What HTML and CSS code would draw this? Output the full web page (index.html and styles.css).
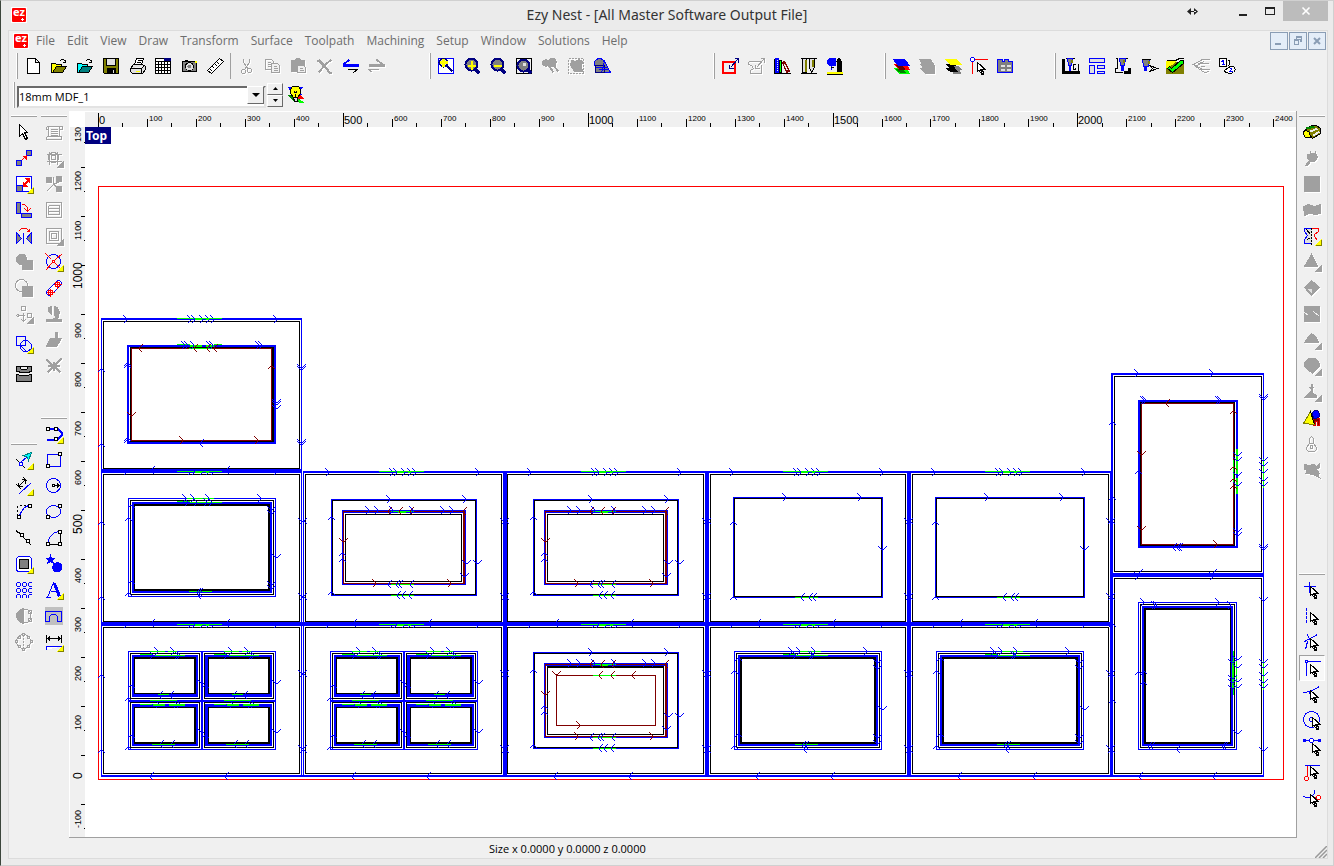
FILE: index.html
```html
<!DOCTYPE html>
<html lang="en">
<head>
<meta charset="utf-8">
<title>Ezy Nest - [All Master Software Output File]</title>
<link rel="stylesheet" href="styles.css">
</head>
<body>
<svg class="defs" aria-hidden="true">
  <symbol id="tri" viewBox="-.5 -.5 18 18" overflow="visible"><path class="tri-f" d="M17 12V17H12z"/><path class="tri-s" d="M12 17H17V12"/></symbol>
  <symbol id="trig" viewBox="-.5 -.5 18 18" overflow="visible"><path class="fg" d="M17 12V17H12z"/></symbol>
  <symbol id="cur" viewBox="-.5 -.5 18 18" overflow="visible"><path class="fw sk" d="M6 4V14L8 12L11 17L13 16L11 11H14z"/><path class="sk" d="M7 5L13 11M9 11L12 17M10 11L13 16"/></symbol>
  <symbol id="logo" viewBox="0 0 16 16"><rect width="16" height="16" fill="#fff"/><rect x="1" y="1" width="14" height="14" rx="1" fill="#f00"/><text class="logo-text" x="2" y="9">ez</text><path d="M10 12H13V13H10zM11 11H12V14H11z" fill="#fff"/></symbol>
</svg>
<div class="window">
  <header class="titlebar">
    <svg class="logo"><use href="#logo"/></svg>
    <h1>Ezy Nest - [All Master Software Output File]</h1>
    <div class="winbtns">
      <svg class="resize-hint" viewBox="0 0 11 9"><path d="M0 4.500L4 1V8zM11 4.500L7 1V8zM2 4H9V5H2z" fill="#222"/></svg>
      <button aria-label="Minimize"><svg viewBox="0 0 10 10"><path d="M1 8H9V10H1z" fill="#222"/></svg></button>
      <button aria-label="Maximize"><svg viewBox="0 0 10 10"><path d="M0 1H10V9H0zM1 3V8H9V3z" fill="#222" fill-rule="evenodd"/></svg></button>
      <button class="close" aria-label="Close"><svg viewBox="0 0 10 10"><path d="M1.500 1.500L8.500 8.500M8.500 1.500L1.500 8.500" stroke="#fff" stroke-width="1.600"/></svg></button>
    </div>
  </header>
  <div class="client">
    <nav class="menubar">
      <svg class="logo"><use href="#logo"/></svg>
      <button>File</button><button>Edit</button><button>View</button><button>Draw</button><button>Transform</button><button>Surface</button><button>Toolpath</button><button>Machining</button><button>Setup</button><button>Window</button><button>Solutions</button><button>Help</button>
      <div class="mdi">
        <button aria-label="Minimize document"><svg viewBox="0 0 16 16"><path d="M4 10H10V12H4z" fill="#8a9db5"/></svg></button>
        <button aria-label="Restore document"><svg viewBox="0 0 16 16"><path d="M6 3H12V9H10V7H6zM4 6H9V12H4z" fill="#8a9db5"/><path d="M7 5H11V6H7zM5 8H8V11H5z" fill="#e4edf8"/></svg></button>
        <button aria-label="Close document"><svg viewBox="0 0 16 16"><path d="M5 5L11 11M11 5L5 11" stroke="#8a9db5" stroke-width="2"/></svg></button>
      </div>
    </nav>

    <div class="toolrow">
      <div class="bar">
        <button class="t" aria-label="New"><svg viewBox="-.5 -.5 18 18"><path class="fw sk" d="M3 1H11L15 5V16H3zM11 1V5H15"/></svg></button>
        <button class="t" aria-label="Open"><svg viewBox="-.5 -.5 18 18"><path class="fy sk" d="M1 15V6H5L6 7H11V9H6L2 15z"/><path class="fo sk" d="M2 15L6 9H16L12 15z"/><path class="sk" d="M9 4L11 2H13L15 4M15 2V5H12"/></svg></button>
        <button class="t" aria-label="Import"><svg viewBox="-.5 -.5 18 18"><path class="sk" fill="#0ff" d="M1 15V6H5L6 7H11V9H6L2 15z"/><path class="sk" fill="#008080" d="M2 15L6 9H16L12 15z"/><path class="sk" d="M9 4L11 2H13L15 4M15 2V5H12"/></svg></button>
        <button class="t" aria-label="Save"><svg viewBox="-.5 -.5 18 18"><path class="fo sk" d="M1 1H16V16H2L1 15z"/><path class="fk" d="M4 10H13V15H4z"/><path class="fe sk" d="M4 1H13V8H4z"/><path class="fe" d="M10 12H11V15H10z"/></svg></button>
        <button class="t" aria-label="Print"><svg viewBox="-.5 -.5 18 18"><path class="fw sk" d="M6 7L8 1H15L13 7zM9 3H13M8 5H12"/><path class="fe sk" d="M2 11L5 7H14L17 9V12L14 16H4L2 14zM2 11H13L16 8M13 11V16"/><path class="sy" d="M7 14H11"/></svg></button>
        <button class="t" aria-label="Calculator"><svg viewBox="-.5 -.5 18 18"><path class="fw sk" d="M1 1H16V16H1z"/><path class="sk" d="M1 4H16M1 7H16M1 10H16M1 13H16M4 4V16M7 4V16M10 4V16M13 4V16"/><path fill="#000080" stroke="#000080" d="M10 1H16V3H10z"/></svg></button>
        <button class="t" aria-label="Snapshot"><svg viewBox="-.5 -.5 18 18"><path class="fd sk" d="M2 4H16V14H2z"/><path class="sk" d="M4 3H7"/><circle class="fe sk" cx="9" cy="9" r="4"/><circle class="fd" cx="9" cy="9" r="2"/><path class="fy" d="M14 3H16V5H14z"/></svg></button>
        <button class="t" aria-label="Measure"><svg viewBox="-.5 -.5 18 18"><path class="fw sk" d="M1 13L13 1L17 4L5 16zM4 12L6 14M6 9L8 11M9 7L11 9M11 5L13 7"/></svg></button>
        <span class="sep"></span>
        <button class="t off" aria-label="Cut"><svg viewBox="-.5 -.5 18 18"><path class="sg" d="M6 1V5L11 12M12 1V5L7 12"/><circle class="sg" cx="6" cy="14" r="2"/><circle class="sg" cx="12" cy="13" r="2"/></svg></button>
        <button class="t off" aria-label="Copy"><svg viewBox="-.5 -.5 18 18"><path class="sg" d="M2 2H8L10 4V12H2zM4 5H7M4 7H8M4 9H7"/><path class="sg fc" d="M8 6H14L16 8V15H8zM10 9H13M10 11H14M10 13H14"/></svg></button>
        <button class="t off" aria-label="Paste"><svg viewBox="-.5 -.5 18 18"><path class="fg" d="M2 3H5L7 1H10L12 3H15V14H2z"/><path class="sg fc" d="M8 8H14L16 10V15H8zM10 11H13M10 13H14"/></svg></button>
        <button class="t off" aria-label="Delete"><svg viewBox="-.5 -.5 18 18"><path class="sg w2" d="M1 3H4L8 7L14 15H16M16 2L10 7L3 15"/><path class="sg w3" d="M3 3L10 9"/></svg></button>
        <button class="t" aria-label="Undo"><svg viewBox="-.5 -.5 18 18"><path class="sb w3" d="M1 8H17"/><path class="sb w2" d="M2 7L8 2"/><path class="sk" d="M6 12H16L12 15"/></svg></button>
        <button class="t off" aria-label="Redo"><svg viewBox="-.5 -.5 18 18"><path class="sg w3" d="M1 8H17"/><path class="sg w2" d="M15 7L9 2"/><path class="sg" d="M11 12H1L5 15"/></svg></button>
      </div>
      <div class="bar z">
        <button class="t" aria-label="Zoom window"><svg viewBox="-.5 -.5 18 18"><path class="fw sb" d="M1 1H16V16H1z"/><path class="sn w2" d="M9 8L15 14"/><circle class="fe sn w2" cx="6" cy="5" r="4"/><path class="sy w3" d="M6 1V9M2 5H10"/></svg></button>
        <button class="t" aria-label="Zoom in"><svg viewBox="-.5 -.5 18 18"><path class="sn w3" d="M11 11L16 16"/><circle class="fd sn w2" cx="8" cy="7" r="6"/><path class="sy w2" d="M8 3V12M4 8H12"/></svg></button>
        <button class="t" aria-label="Zoom out"><svg viewBox="-.5 -.5 18 18"><path class="sn w3" d="M11 11L16 16"/><circle class="fd sn w2" cx="8" cy="7" r="6"/><path class="sy w2" d="M4 8H12"/></svg></button>
        <button class="t" aria-label="Zoom all"><svg viewBox="-.5 -.5 18 18"><path class="sk" d="M1 1H16V16H1z"/><path class="sn w3" d="M12 12L16 16"/><circle class="fd sn w2" cx="8" cy="8" r="6"/><path class="fe" d="M7 5H10V8H7z"/></svg></button>
        <button class="t off" aria-label="Zoom previous"><svg viewBox="-.5 -.5 18 18"><path class="fg" d="M1 4L4 2L7 3L9 1H13L15 4L14 8L11 9L8 9L6 8L4 9L1 7z"/><path class="sg w2" d="M8 9L12 15M12 8L17 14"/></svg></button>
        <button class="t off" aria-label="Zoom selected"><svg viewBox="-.5 -.5 18 18"><path class="sg" stroke-dasharray="2 1" d="M1 1H16V16H1z"/><path class="fg" d="M4 3L8 4L11 2L15 4L14 8L15 14L7 14L5 11L3 8z"/></svg></button>
        <button class="t" aria-label="View shapes"><svg viewBox="-.5 -.5 18 18"><circle class="fd sb" cx="6" cy="6" r="5"/><path class="fd sb" d="M11 4L17 15H7z"/><path class="fd sn" d="M2 8H11V15H2z"/><path class="sb" d="M2 10H13M5 12H14M11 4L8 15"/></svg></button>
      </div>
      <div class="bar m">
        <button class="t" aria-label="Sheet setup"><svg viewBox="-.5 -.5 18 18"><path fill="#f0f0f0" stroke="#f00" d="M1 4H14V16H1z"/><path fill="#f0f0f0" stroke="#f00" d="M2 5H13V15H2z"/><path class="sn" d="M8 7V11H12M9 10L17 1M13 1H17V5"/></svg></button>
        <button class="t off" aria-label="Part setup"><svg viewBox="-.5 -.5 18 18"><path class="sg" d="M1 4H13M1 4V7L4 8L6 11L3 13V16H14V7M8 7V11H12M9 10L17 1M13 1H17V5"/></svg></button>
        <button class="t" aria-label="Library"><svg viewBox="-.5 -.5 18 18"><path class="fb sb" d="M2 1H5V15H2z"/><path class="se" stroke-dasharray="1 1" d="M4 2V14"/><path fill="#0f0" class="sk" d="M6 3H8V15H6z"/><path fill="#800000" stroke="#800000" d="M9 5L11 4L16 14L13 15z"/><path class="se" d="M11 7L14 13"/><path class="sk" d="M1 16H17M1 1V16"/></svg></button>
        <button class="t" aria-label="Tools"><svg viewBox="-.5 -.5 18 18"><path class="fe sk" d="M3 1H7V15H3zM10 1H15V10L12 15L10 10z"/><path class="so w2" d="M6 2V14M13 2V9"/><path class="sk" d="M1 1H17M1 16H17"/></svg></button>
        <button class="t" aria-label="Machine"><svg viewBox="-.5 -.5 18 18"><path class="fb sb" d="M2 3L4 1H10V8H4L2 6z"/><path class="fk sk" d="M12 2L14 1L16 4V14H12z"/><path class="sb" d="M6 8V12"/><path class="sk" d="M10 4H12M5 10H8"/><path class="sy w2" d="M1 15H17"/><path class="sk" d="M1 17H17"/></svg></button>
      </div>
      <div class="bar l">
        <button class="t" aria-label="Layers"><svg viewBox="-.5 -.5 18 18"><path fill="#0f0" stroke="#0f0" d="M2 11H13L17 16H7z"/><path fill="#008000" d="M2 11H9L13 15H7z"/><path fill="#f00" stroke="#f00" d="M2 7H13L17 12H7z"/><path fill="#600" d="M3 7H9L13 12H7z"/><path class="fb sb" d="M1 2H12L17 8H6z"/></svg></button>
        <button class="t off" aria-label="Layer off"><svg viewBox="-.5 -.5 18 18"><path class="fg" d="M1 2H12L16 8V16H7L2 11L5 10L2 7L4 6z"/></svg></button>
        <button class="t" aria-label="Layer manager"><svg viewBox="-.5 -.5 18 18"><path class="fd" d="M6 11H14L17 16H9z"/><path class="fk sk" d="M2 11H10L13 14H6zM2 7H10L13 11H6z"/><path class="fd" d="M9 8H14L17 12H11z"/><path class="fy sy" d="M1 2H12L17 7H6z"/></svg></button>
        <button class="t" aria-label="Origin"><svg viewBox="-.5 -.5 18 18"><path class="sr" d="M2 2V16M2 2H17"/><circle class="fw sb" cx="2" cy="2" r="2"/><use href="#cur"/></svg></button>
        <button class="t" aria-label="Properties"><svg viewBox="-.5 -.5 18 18"><path class="fd sb" d="M1 4V2H6V4H8V2H12V4H16V15H1z"/><path class="fe" d="M4 7H8V9H4zM10 7H14V9H10zM4 11H8V13H4zM10 11H14V13H10z"/></svg></button>
      </div>
      <div class="bar c">
        <button class="t" aria-label="NC code"><svg viewBox="-.5 -.5 18 18"><path class="sk w3" d="M1 1V15H17"/><path class="sk" d="M3 1H5M10 1H12"/><path class="fd sb" d="M5 1H10V4L9 5V8H6V5L5 4z"/><path class="fb sb" d="M7 9H8V13H7z"/><path class="so w2" d="M9 2V5"/><path class="sk" d="M13 7H11V12H13V10M15 8L16 7V13"/></svg></button>
        <button class="t" aria-label="Nest"><svg viewBox="-.5 -.5 18 18"><path class="fe sb" d="M1 1H16V5H1zM1 8H6V16H1zM9 8H16V11H9zM9 14H16V16H9z"/></svg></button>
        <button class="t" aria-label="Drill"><svg viewBox="-.5 -.5 18 18"><path class="sk" d="M1 1H3V11H1V15H8"/><path class="sk w3" d="M9 15H15V10"/><path class="fd sb" d="M5 1H11V4L10 5V8H6V5L5 4z"/><path class="fb sb" d="M7 9H9V13H7z"/><path class="so w2" d="M9 2V5"/><path class="sk" d="M11 1H13"/></svg></button>
        <button class="t" aria-label="Simulate"><svg viewBox="-.5 -.5 18 18"><path class="fd sb" d="M2 2H9V5L8 6V9H3V6L2 5z"/><path class="fb sb" d="M4 10H6V13H4z"/><path class="so w2" d="M8 3V6"/><path class="sk" d="M1 2H10M9 8L17 11L9 14L12 11z"/></svg></button>
        <button class="t" aria-label="Solid preview"><svg viewBox="-.5 -.5 18 18"><path class="fo so" d="M0 9L10 5H17V16H0z"/><path class="fy sy" d="M0 4H9L3 9L0 10z"/><path class="sk" d="M0 3H9L13 1H17"/><path fill="#0f0" class="sk" d="M1 11L3 9L5 11L14 3H17V6L6 15z"/></svg></button>
        <button class="t off" aria-label="Toolpath order"><svg viewBox="-.5 -.5 18 18"><path class="sg" d="M17 2H10L1 7L10 12H17M16 6H8L3 9L12 15L17 14M12 4L6 6M12 9H8"/></svg></button>
        <button class="t" aria-label="Sequence"><svg viewBox="-.5 -.5 18 18"><path class="fw sk" d="M1 1H8V9H1zM9 3H11V7L9 9M10 10L12 9H15L17 12L15 15L12 16L7 15L6 13z"/><path class="sb" d="M3 4L5 3V7M3 7H6M11 11H13V12L11 14H14"/></svg></button>
      </div>
    </div>

    <div class="comborow bar">
      <label class="combo"><select aria-label="Sheet"><option>18mm MDF_1</option></select></label>
      <div class="spin"><button aria-label="Previous sheet"><svg viewBox="0 0 7 4"><path d="M0 4L3.500 0L7 4z"/></svg></button><button aria-label="Next sheet"><svg viewBox="0 0 7 4"><path d="M0 0L3.500 4L7 0z"/></svg></button></div>
      <button class="t" aria-label="Highlight sheet"><svg viewBox="-.5 -.5 18 18"><path class="fb sb" d="M1 1H15L11 4L14 8H6z"/><path fill="#080" stroke="#080" d="M1 9H8L14 15H7z"/><path fill="#f00" stroke="#f00" d="M11 7L16 12H11z"/><path fill="#0f0" stroke="#0f0" d="M11 13L16 16H12z"/><path class="fy sk" d="M5 0H11L13 3V7L10 11H6L3 7V3z"/><path class="fe sk" d="M6 11H10V15H7z"/><path class="sk" d="M7 4V6H9V4M8 7V10"/></svg></button>
    </div>

    <main class="work">
      <div class="dock left">
        <div class="col a">
          <div class="vbar">
            <button class="t" aria-label="Select"><svg viewBox="-.5 -.5 18 18"><path class="fw sk" d="M4 1V13L7 10L10 16L12 15L9 9H12z"/></svg></button>
            <button class="t" aria-label="Move"><svg viewBox="-.5 -.5 18 18"><path class="fd sb" d="M1 11H6V16H1zM11 1H16V6H11z"/><path class="sr" d="M6 11L11 6"/><path fill="#f00" stroke="#f00" d="M8 7H11V10z"/></svg></button>
            <button class="t" aria-label="Scale"><svg viewBox="-.5 -.5 18 18"><path class="fw sb" d="M1 1H16V16H1z"/><path class="fd sb" d="M1 10H7V16H1z"/><path class="sr w2" d="M8 10L14 4"/><path fill="#f00" stroke="#f00" d="M10 3H14V7zM8 7V11H12z"/><use href="#tri"/></svg></button>
            <button class="t" aria-label="Rotate"><svg viewBox="-.5 -.5 18 18"><path class="fd sb" d="M1 1H5V12H1zM6 12H16V16H6z"/><path class="sr" d="M6 3H9L12 6V10M9 7L12 10L15 7"/></svg></button>
            <button class="t" aria-label="Mirror"><svg viewBox="-.5 -.5 18 18"><path class="fd sb" d="M1 5V16L6 11zM16 5V16L11 11z"/><path class="sb" d="M8 5V16"/><path class="sr" d="M3 4L6 1H11L14 4M14 1V4H11"/></svg></button>
            <button class="t off" aria-label="Union"><svg viewBox="-.5 -.5 18 18"><path class="fg" d="M3 2L5 1H9L11 4V7H17V16H7V11H4L1 8V4z"/></svg></button>
            <button class="t off" aria-label="Subtract"><svg viewBox="-.5 -.5 18 18"><circle class="sg" cx="6" cy="6" r="6"/><path class="fg" d="M7 7H17V17H7z"/></svg></button>
            <button class="t off" aria-label="Array"><svg viewBox="-.5 -.5 18 18"><path class="sg" d="M6 1H10V5H6zM12 8H16V12H12zM8 7V16M2 10H9M4 8L1 10L4 12M6 14L8 16L10 14"/><use href="#trig"/></svg></button>
            <button class="t tall" aria-label="Group"><svg viewBox="-.5 -.5 18 18"><path class="sb" d="M1 1H10V10H1zM8 5H12L16 9V13L12 16H8L5 13V8zM5 10L11 16"/><use href="#tri"/></svg></button>
            <button class="t tall" aria-label="Join"><svg viewBox="-.5 -.5 18 18"><path class="fd sk" d="M1 1H4L6 4H11L13 1H16V6L12 7H7L1 6zM1 9L6 10H11L16 9V16H1z"/><path class="sk" d="M1 1H16"/></svg></button>
          </div>
          <div class="vbar second">
            <button class="t" aria-label="Node edit"><svg viewBox="-.5 -.5 18 18"><path class="sk" d="M1 8L10 17"/><path fill="#0ff" stroke="#008080" d="M8 4L16 1L13 9L12 6z"/><path class="sb" d="M5 11L12 5"/><path class="fw sb" d="M4 11H7V14H4z"/><use href="#tri"/></svg></button>
            <button class="t" aria-label="Dimension line"><svg viewBox="-.5 -.5 18 18"><path class="sk" d="M3 9L10 2M3 9V5M3 9H7M10 2V6M10 2H6M1 7L6 12M8 0L12 4"/><path class="sb" d="M4 16L16 5"/><use href="#tri"/></svg></button>
            <button class="t" aria-label="Arc"><svg viewBox="-.5 -.5 18 18"><path class="sk" stroke-dasharray="2 2" d="M2 12V2H12"/><path class="sb" d="M4 12L6 8L9 4L13 2"/><path class="fw sk" d="M2 12H5V15H2zM13 1H16V4H13z"/></svg></button>
            <button class="t" aria-label="Polyline"><svg viewBox="-.5 -.5 18 18"><path class="sk" d="M1 1L5 5L12 12L16 16M1 2L5 4"/><path class="fw sk" d="M5 4H8V7H5zM11 10H14V13H11z"/></svg></button>
            <button class="t" aria-label="Offset"><svg viewBox="-.5 -.5 18 18"><rect class="fw sb" x="1" y="1" width="15" height="15" rx="3"/><path class="fd sk" d="M4 4H13V13H4z"/><use href="#tri"/></svg></button>
            <button class="t" aria-label="Pattern"><svg viewBox="-.5 -.5 18 18"><path class="sb" d="M2 1H4L5 2V4L4 5H2L1 4V2zM8 1H10L11 2V4L10 5H8L7 4V2zM16 5H14L13 4V2L14 1H16M2 7H4L5 8V10L4 11H2L1 10V8zM8 7H10L11 8V10L10 11H8L7 10V8zM16 11H14L13 10V8L14 7H16M1 16V14L2 13H4L5 14V16M7 16V14L8 13H10L11 14V16M13 16V14L14 13H16"/></svg></button>
            <button class="t off" aria-label="Half mirror"><svg viewBox="-.5 -.5 18 18"><path class="fg" d="M8 1V16L4 14L1 10V6L4 3z"/><path class="sg" d="M8 2H12L15 5V12L12 15H8M13 3H16V6H13zM13 11H16V14H13z"/></svg></button>
            <button class="t off" aria-label="Circular nodes"><svg viewBox="-.5 -.5 18 18"><circle class="sg" cx="8" cy="8" r="7"/><path class="sg" stroke-dasharray="2 1" d="M8 1V16"/><path class="sg fc" d="M0 7H2V9H0zM15 7H17V9H15zM3 3H5V5H3zM12 3H14V5H12zM3 12H5V14H3zM12 12H14V14H12zM7 15H9V17H7zM7 0H9V2H7z"/></svg></button>
          </div>
        </div>
        <div class="col b">
          <div class="vbar">
            <button class="t off" aria-label="Plate"><svg viewBox="-.5 -.5 18 18"><path class="sg" d="M1 3H17M3 3V13M14 3V13M1 13H16M1 3V6H3M17 3V6H14M1 13V16H16V13M5 6H12M5 8H12M5 10H12M5 12H12"/></svg></button>
            <button class="t off" aria-label="Round"><svg viewBox="-.5 -.5 18 18"><circle class="sg" cx="8" cy="8" r="5"/><path class="sg" d="M4 2V15M12 2V15M1 5H16M1 12H16M6 6H10V10H6z"/><use href="#trig"/></svg></button>
            <button class="t off" aria-label="Explode"><svg viewBox="-.5 -.5 18 18"><path class="fg" d="M1 2H6V7H1zM11 1H16V6H11zM11 11H16V16H11z"/><path class="sg" d="M1 16L8 9V1M8 9L16 5M8 9L12 12"/></svg></button>
            <button class="t off" aria-label="List"><svg viewBox="-.5 -.5 18 18"><path class="sg" d="M1 1H16V16H1zM3 4H14M3 7H14M3 10H14M3 13H14M3 4V13M14 4V13"/></svg></button>
            <button class="t off" aria-label="Nested offset"><svg viewBox="-.5 -.5 18 18"><path class="sg" d="M1 1H16V16H1zM4 4H13V13H4zM6 6H11V11H6z"/><use href="#trig"/></svg></button>
            <button class="t" aria-label="Trim circle"><svg viewBox="-.5 -.5 18 18"><circle class="sb" cx="8" cy="8" r="7"/><path class="sr" d="M0 0L6 6M17 0L10 6M0 17L6 10M10 10L16 16"/><path class="fw sr" d="M7 7H9V9H7z"/><use href="#tri"/></svg></button>
            <button class="t" aria-label="Slot"><svg viewBox="-.5 -.5 18 18"><path class="fw sb" d="M1 12L12 1H14L16 3V5L5 16H3L1 14z"/><path class="sr" d="M1 13H9M5 9V17M8 5H16M12 1V9M3 11H7V15H3zM10 3H14V7H10z"/></svg></button>
            <button class="t off" aria-label="Flow"><svg viewBox="-.5 -.5 18 18"><path class="fg" d="M1 14V16H16V14H12L14 7L12 2L9 1V8L10 12L7 14zM3 2L6 1V9L3 6z"/></svg></button>
            <button class="t off" aria-label="Extrude"><svg viewBox="-.5 -.5 18 18"><path class="fg" d="M5 7H10V1H12V7H16L11 15H1z"/></svg></button>
            <button class="t off" aria-label="Break"><svg viewBox="-.5 -.5 18 18"><path class="sg w2" d="M1 2L15 15M16 1L2 15M2 8H14M8 4V13"/></svg></button>
          </div>
          <div class="vbar third">
            <button class="t" aria-label="Path"><svg viewBox="-.5 -.5 18 18"><path class="sb w2" d="M3 3H12L16 7V10L12 14H1"/><path class="fw sk" d="M1 2H4V5H1zM9 2H12V5H9zM9 12H12V15H9z"/><use href="#tri"/></svg></button>
            <button class="t" aria-label="Rectangle"><svg viewBox="-.5 -.5 18 18"><path class="sb" d="M2 3H15V15H2z"/><path class="fw sk" d="M1 13H4V16H1zM13 1H16V4H13z"/></svg></button>
            <button class="t" aria-label="Circle"><svg viewBox="-.5 -.5 18 18"><circle class="sb" cx="8" cy="8" r="7"/><path class="fw sk" d="M7 7H9V9H7zM9 8H14M12 6V10L14 8z"/></svg></button>
            <button class="t" aria-label="Ellipse"><svg viewBox="-.5 -.5 18 18"><ellipse class="sb" cx="8" cy="8" rx="7" ry="6"/><path class="fw sk" d="M1 12H4V15H1zM13 1H16V4H13z"/></svg></button>
            <button class="t" aria-label="Sector"><svg viewBox="-.5 -.5 18 18"><path class="sb" d="M2 14L4 8L9 3L14 2"/><path class="sk" d="M2 15H15V2"/><path class="fw sk" d="M1 13H4V16H1zM13 13H16V16H13zM13 1H16V4H13z"/></svg></button>
            <button class="t" aria-label="Shapes"><svg viewBox="-.5 -.5 18 18"><path class="fb sb" d="M5 0L6 3H9L7 5L8 8L5 6L2 8L3 5L1 3H4zM9 8L12 7L16 9V14L14 16H9L7 12z"/></svg></button>
            <button class="t" aria-label="Text"><svg viewBox="-.5 -.5 18 18"><path class="sb" d="M0 16H5M2 16L8 1M5 10H11"/><path class="sb w3" d="M9 2L14 15"/><use href="#tri"/></svg></button>
            <button class="t on" aria-label="Contour"><svg viewBox="-.5 -.5 18 18"><path class="sb" d="M0 14V4H16V14H12V9L10 7H6L4 9V14z"/></svg></button>
            <button class="t" aria-label="Dimension"><svg viewBox="-.5 -.5 18 18"><path class="sk" d="M1 1V9M16 1V9M1 5H16M4 3L2 5L4 7zM13 3L15 5L13 7z"/><path class="fw sb" d="M1 16V13H16"/><use href="#tri"/></svg></button>
          </div>
        </div>
      </div>

      <div class="view">
        <div class="corner"></div>
        <svg class="rx" id="rx"></svg>
        <svg class="ry" id="ry"></svg>
        <div class="sheet"><svg id="cad" role="img" aria-label="Nested sheet"></svg><span class="tag">Top</span></div>
      </div>

      <div class="dock right">
        <div class="vbar">
          <button class="t" aria-label="Surface view"><svg viewBox="-.5 -.5 18 18"><path class="fo sk" d="M0 8L8 2H13L17 5V10L9 15L6 11z"/><path class="fy sk" d="M0 8L3 7L6 9L7 14H2L0 11z"/><path stroke="#080" stroke-width="2" d="M3 5L11 3"/><path class="se w2" d="M7 8L14 5M10 12L16 8"/></svg></button>
          <button class="t off" aria-label="Plug"><svg viewBox="-.5 -.5 18 18"><path class="fg" d="M4 5L12 4L14 8L11 12L7 12L4 16H2L6 11L4 9zM7 1V5M12 1V5"/></svg></button>
          <button class="t off" aria-label="Flat surface"><svg viewBox="-.5 -.5 18 18"><path class="fg" d="M1 1H16V16H1z"/></svg></button>
          <button class="t off" aria-label="Wave surface"><svg viewBox="-.5 -.5 18 18"><path class="fg" d="M0 5L5 3L11 5L17 3V12L12 13L6 12L1 14z"/></svg></button>
          <button class="t" aria-label="Revolve"><svg viewBox="-.5 -.5 18 18"><path class="fe sb" d="M8 1H1V4L4 8L1 12V16H8"/><path class="sk" stroke-dasharray="2 1" d="M8 0V17"/><path class="sr" d="M8 1H15V4L11 7V9L14 13"/><path class="sk" d="M3 2L7 7M4 12L7 10"/><use href="#tri"/></svg></button>
          <button class="t off" aria-label="Cone"><svg viewBox="-.5 -.5 18 18"><path class="fg" d="M8 1L14 13H1z"/><use href="#trig"/></svg></button>
          <button class="t off" aria-label="Diamond"><svg viewBox="-.5 -.5 18 18"><path class="fg" d="M8 1L16 8L8 16L1 8z"/><path class="fe" d="M3 9H8V14z"/></svg></button>
          <button class="t off" aria-label="Patch"><svg viewBox="-.5 -.5 18 18"><path class="fg" d="M1 1H16V16H1z"/><path class="se" d="M1 7L5 10M10 6L16 11"/></svg></button>
          <button class="t off" aria-label="Dome"><svg viewBox="-.5 -.5 18 18"><path class="fg" d="M1 11L5 5L8 2L13 6L15 11z"/><use href="#trig"/></svg></button>
          <button class="t off" aria-label="Sphere"><svg viewBox="-.5 -.5 18 18"><path class="fg" d="M5 1H12L16 6V9L9 16L1 9V5z"/><use href="#trig"/></svg></button>
          <button class="t off" aria-label="Project"><svg viewBox="-.5 -.5 18 18"><path class="fg" d="M1 14L7 8L13 12V14z"/><path class="sg w2" d="M8 0V8"/><path class="fg" d="M6 4H10L8 6z"/><use href="#trig"/></svg></button>
          <button class="t" aria-label="Solid shapes"><svg viewBox="-.5 -.5 18 18"><path fill="#800000" stroke="#d00" d="M10 9H16V16H14V12H12V16H10z"/><path class="fb" stroke="#008" d="M9 3L11 1H14L16 4V7L13 9H10z"/><path class="fy so" d="M0 14L7 2L11 15z"/><path class="sk" d="M7 2L11 15"/></svg></button>
          <button class="t off" aria-label="Light"><svg viewBox="-.5 -.5 18 18"><path class="sg" d="M8 1L10 3V8L13 12V14L11 16H5L3 14V12L6 8V3zM6 8H10M7 10H9V13H7z"/></svg></button>
          <button class="t off" aria-label="Trim surface"><svg viewBox="-.5 -.5 18 18"><path class="fg" d="M1 3L5 4L11 3L13 5L16 2V6L13 8L16 12L14 13L16 16L10 13L2 12L4 9L1 8z"/></svg></button>
        </div>
        <div class="vbar snap">
          <button class="t" aria-label="Snap point"><svg viewBox="-.5 -.5 18 18"><path class="sb" d="M6 0V11M0 5H12"/><use href="#cur"/></svg></button>
          <button class="t" aria-label="Snap vertical"><svg viewBox="-.5 -.5 18 18"><path class="sb" stroke-dasharray="3 1" d="M3 0V16"/><use href="#cur"/></svg></button>
          <button class="t" aria-label="Snap intersection"><svg viewBox="-.5 -.5 18 18"><path class="sb" d="M1 8L14 1M4 1L7 8M4 8L2 16"/><use href="#cur"/></svg></button>
          <button class="t pressed" aria-label="Snap corner"><svg viewBox="-.5 -.5 18 18"><path class="sb" d="M3 2V16M3 2H17"/><circle class="fw sb" cx="3" cy="2" r="1"/><use href="#cur"/></svg></button>
          <button class="t" aria-label="Snap tangent"><svg viewBox="-.5 -.5 18 18"><path class="sb" d="M0 7L7 6L16 1M6 6V8"/><use href="#cur"/></svg></button>
          <button class="t" aria-label="Snap centre"><svg viewBox="-.5 -.5 18 18"><circle class="sb" cx="8" cy="8" r="8"/><circle class="sb" cx="8" cy="8" r="2"/><use href="#cur" x="2" y="1"/></svg></button>
          <button class="t" aria-label="Snap midpoint"><svg viewBox="-.5 -.5 18 18"><path class="sb" d="M1 3H16"/><path class="fb sb" d="M0 2H2V4H0zM15 2H17V4H15z"/><circle class="fw sb" cx="8" cy="3" r="2"/><use href="#cur" x="2" y="1"/></svg></button>
          <button class="t" aria-label="Snap perpendicular"><svg viewBox="-.5 -.5 18 18"><path class="sb" d="M1 2H16"/><path class="sr" d="M4 2V13"/><circle class="sr" cx="3" cy="15" r="2"/><use href="#cur" x="0" y="-2"/></svg></button>
          <button class="t" aria-label="Snap normal"><svg viewBox="-.5 -.5 18 18"><path class="sb" d="M0 7L3 8H7L11 4V0"/><path class="sr" d="M7 8H14"/><circle class="fw sr" cx="15" cy="8" r="2"/><use href="#cur"/></svg></button>
        </div>
      </div>
    </main>

    <footer class="status"><span>Size x 0.0000 y 0.0000 z 0.0000</span><svg viewBox="0 0 12 12"><path d="M0 12L12 0M4 12L12 4M8 12L12 8" stroke="#999" stroke-width="1.500"/></svg></footer>
  </div>
</div>
<script src="cad.js"></script>
</body>
</html>
```

FILE: styles.css
```css
*, *::before, *::after { box-sizing: border-box; }
body { margin: 0; font-family: "Open Sans", "Noto Sans", sans-serif; }
button { border: 0; padding: 0; margin: 0; background: none; font: inherit; color: inherit; }
svg { display: block; }
.defs { display: block; width: 0; height: 0; position: absolute; }

.window { height: 100vh; display: flex; flex-direction: column; background: #ebebeb; border: 1px solid #d0d0d0; border-left-color: #3c463c; padding: 0 5px 6px 7px; }
.titlebar { height: 29px; flex: none; display: flex; align-items: flex-start; }
.titlebar .logo { margin: 6px 0 0 3px; }
.logo { width: 16px; height: 16px; flex: none; }
.logo-text { font: bold 11px "Noto Sans", sans-serif; fill: #fff; }
.titlebar h1 { flex: 1; margin: 4px 0 0; padding-left: 120px; text-align: center; font: 400 14px/20px "Noto Sans", sans-serif; color: #333; white-space: nowrap; }
.winbtns { display: flex; align-items: flex-start; flex: none; }
.winbtns button { width: 27px; height: 20px; display: grid; place-items: center; }
.winbtns svg { width: 10px; height: 10px; }
.winbtns .resize-hint { width: 11px; height: 9px; margin: 6px 31px 0 0; }
.winbtns .close { width: 45px; background: #bcbcbc; }

.client { flex: 1; min-height: 0; display: flex; flex-direction: column; background: #f0f0f0; border: 1px solid #dcdcdc; }
.menubar { height: 20px; flex: none; display: flex; align-items: center; gap: 12px; padding-left: 4px; font-size: 12px; line-height: 18px; color: #6d6d6d; }
.menubar > .logo { margin-right: -5px; }
.mdi { margin-left: auto; margin-right: 1px; display: flex; gap: 1px; align-self: flex-start; padding-top: 1px; }
.mdi button { width: 18px; height: 18px; border: 1px solid #8a9db5; background: #e4edf8; }
.mdi svg { width: 16px; height: 16px; }

.toolrow { display: flex; height: 29px; flex: none; padding-left: 7px; }
.bar { display: flex; align-items: center; flex: none; }
.bar::before { content: ""; width: 2px; height: 26px; margin-right: 2px; border-left: 1px solid #fff; border-right: 1px solid #a0a0a0; }
.z { margin-left: 40px; }
.m { margin-left: 98px; }
.l { margin-left: 37px; }
.c { margin-left: 36px; }
.sep { width: 1px; height: 26px; margin: 0 2px; background: #a0a0a0; }
.t { width: 26px; height: 26px; flex: none; display: grid; place-items: center; }
.t svg { width: 18px; height: 18px; shape-rendering: crispEdges; fill: none; overflow: visible; }
.off svg { filter: drop-shadow(1px 1px 0 #fff); }
.on { background: #c0c0c0; box-shadow: inset 0 0 0 4px #f0f0f0; }
.pressed { background: #f8f8f8; border: 1px solid #fff; border-top-color: #a0a0a0; border-left-color: #a0a0a0; }

.sk { stroke: #000; } .sb { stroke: #00f; } .sg { stroke: #a0a0a0; } .sr { stroke: #f00; }
.sn { stroke: #000080; } .sy { stroke: #ff0; } .so { stroke: #808000; } .se { stroke: #eee; }
.fw { fill: #fff; } .fk { fill: #000; } .fb { fill: #00f; } .fd { fill: #808080; }
.fy { fill: #ff0; } .fo { fill: #808000; } .fe { fill: #e0e0e0; } .fc { fill: #f0f0f0; }
.fg { fill: #a0a0a0; stroke: #a0a0a0; }
.w2 { stroke-width: 2; } .w3 { stroke-width: 3; }
.tri-f { fill: #ff0; stroke: #ff0; } .tri-s { fill: none; stroke: #808000; }

.comborow { height: 31px; flex: none; padding: 0 0 2px 4px; }
.comborow::before { margin-right: 2px; }
.combo { position: relative; width: 249px; height: 22px; margin-right: 1px; }
.combo select { appearance: none; width: 100%; height: 100%; padding: 0 20px 0 0; border: 2px solid #696969; border-right-color: #e3e3e3; border-bottom-color: #e3e3e3; border-radius: 0; background: #fff; font: 11px/16px "Open Sans", sans-serif; color: #000; }
.combo::before { content: ""; position: absolute; top: 2px; right: 2px; width: 17px; height: 18px; background: #f0f0f0; border: 1px solid #fff; border-right-color: #696969; border-bottom-color: #696969; }
.combo::after { content: ""; position: absolute; right: 6px; top: 9px; border: 4px solid transparent; border-top-color: #000; border-bottom: 0; }
.spin { display: flex; flex-direction: column; width: 16px; }
.spin button { height: 12px; display: grid; place-items: center; border: 1px solid #fff; border-right-color: #696969; border-bottom-color: #696969; background: #f0f0f0; }
.spin svg { width: 5px; height: 3px; }

.work { flex: 1; min-height: 0; display: flex; }
.dock { flex: none; display: flex; padding-top: 4px; }
.left { width: 60px; padding-left: 2px; gap: 4px; }
.right { width: 30px; padding-left: 2px; flex-direction: column; }
.vbar { display: flex; flex-direction: column; }
.vbar::before { content: ""; width: 26px; height: 2px; margin-bottom: 2px; border-top: 1px solid #fff; border-bottom: 1px solid #a0a0a0; }
.tall { height: 30px; padding-top: 4px; }
.second { margin-top: 56px; }
.third { margin-top: 38px; }
.snap { margin-top: 90px; }

.view { flex: 1; min-width: 0; display: grid; grid-template: 16px 1fr / 16px 1fr; border: 1px solid #a0a0a0; border-width: 0 1px 1px 0; }
.corner, .sheet { background: #fff; }
.rx, .ry { width: 100%; height: 100%; overflow: hidden; background: #f0f0f0; font-family: "Liberation Sans", Arial, sans-serif; shape-rendering: crispEdges; }
.rx { border-top: 1px solid #fff; }
.ry { border-left: 1px solid #fff; }
.sheet { position: relative; min-height: 0; overflow: hidden; }
.sheet svg { position: absolute; width: 100%; height: 100%; shape-rendering: crispEdges; }
.tag { position: absolute; left: 0; top: 0; width: 26px; padding-left: 1px; background: #000080; color: #fff; font: bold 12px/17px "Noto Sans", sans-serif; }
.rs { font-size: 8px; } .rl { font-size: 11px; } .rv { font-size: 9px; } .rw { font-size: 12px; }

.status { height: 20px; flex: none; display: flex; align-items: center; justify-content: space-between; padding: 2px 0 0 480px; font-size: 11px; line-height: 16px; color: #000; }
.status svg { width: 12px; height: 12px; align-self: flex-end; }
```

FILE: cad.js
```js
const NS = 'http://www.w3.org/2000/svg';
const BLUE = '#00f', BLACK = '#000', MAROON = '#800000', GREEN = '#0f0';

function node(parent, tag, attrs, text) {
  const n = document.createElementNS(NS, tag);
  for (const k in attrs) n.setAttribute(k, attrs[k]);
  if (text !== undefined) n.textContent = text;
  parent.appendChild(n);
  return n;
}

/* Rulers: origin is the lower left corner of the sheet. */
const rx = document.getElementById('rx');
for (let v = 0; v <= 2400; v += 50) {
  const x = Math.floor(13.5 + v * 0.4897);
  const big = v % 500 === 0, mid = v % 100 === 0;
  const top = big ? 1 : mid ? 7 : 11;
  node(rx, 'rect', { x, y: top, width: 1, height: 15 - top });
  if (mid) node(rx, 'text', { x: x + (big ? 1 : 2), y: big ? 12 : 9, class: big ? 'rl' : 'rs' }, v);
}
const ry = document.getElementById('ry');
for (let v = -100; v <= 1300; v += 50) {
  const y = Math.round(652 - v * 0.49);
  const big = v % 500 === 0, mid = v % 100 === 0;
  if (!mid) node(ry, 'rect', { x: 11, y, width: 4, height: 1 });
  else if (!big) node(ry, 'rect', { x: 14, y, width: 1, height: 1 });
  /* The topmost label has room for three digits only. */
  const label = v === 1300 ? '130' : v;
  if (mid) node(ry, 'text', { transform: `translate(${big ? 12 : 11} ${y}) rotate(-90)`, class: big ? 'rw' : 'rv' }, label);
}

const g = node(document.getElementById('cad'), 'g', { transform: 'translate(-85 -127)' });

/* Rectangular ring between outer bounds, with a thickness for each side. */
function ring(c, x0, y0, x1, y1, t = 1, r = t, b = t, l = t) {
  node(g, 'path', { fill: c, 'fill-rule': 'evenodd',
    d: `M${x0} ${y0}H${x1}V${y1}H${x0}zM${x0 + l} ${y0 + t}V${y1 - b}H${x1 - r}V${y0 + t}z` });
}
function bar(c, x, y, w, h) { node(g, 'rect', { fill: c, x, y, width: w, height: h }); }

/* Direction chevrons; the tip sits on the toolpath. */
const ARM = { '>': 'M-3 -4L0 -1V1L-3 4', '<': 'M3 -4L0 -1V1L3 4', 'v': 'M-4 -3L-1 0H1L4 -3', '^': 'M-4 3L-1 0H1L4 3' };
function arrows(dir, c, ...pts) {
  for (let i = 0; i < pts.length; i += 2)
    node(g, 'path', { d: ARM[dir], fill: 'none', stroke: c, transform: `translate(${pts[i] + 0.5} ${pts[i + 1] + 0.5})` });
}
function row(dir, c, y, ...xs) { xs.forEach(x => arrows(dir, c, x, y)); }
function column(dir, c, x, ...ys) { ys.forEach(y => arrows(dir, c, x, y)); }

ring('#f00', 98, 186, 1284, 780);

/* Door outlines */
const cols = [[103, 300], [305, 502], [507, 704], [710, 906], [912, 1109]];
ring(BLUE, 101, 318, 302, 473, 2, 1, 4, 1);
ring(BLACK, 103, 321, 300, 469);
bar(BLUE, 101, 470, 1, 307);
bar(BLUE, 301, 470, 1, 307);
bar(BLUE, 303, 471, 1, 306);
bar(BLUE, 303, 471, 810, 2);
bar(BLUE, 101, 622, 1010, 4);
bar(BLUE, 101, 775, 1163, 2);
[503, 705, 907].forEach(x => bar(BLUE, x, 471, 4, 306));
bar(BLUE, 1110, 471, 3, 306);
ring(BLUE, 1111, 373, 1264, 777, 2, 1, 2, 2);
bar(BLUE, 1111, 573, 153, 4);
for (const [a, b] of cols) { ring(BLACK, a, 474, b, 622); ring(BLACK, a, 627, b, 774); }
ring(BLACK, 1114, 376, 1262, 572);
ring(BLACK, 1114, 578, 1262, 774);

/* Lead-in marks on a door's top edge; on a shared edge only the lower half shows. */
function topMarks(dx, y, full) {
  row('>', BLUE, y, ...[126, 190, 194, 202, 208, 213, 276].map(v => v + dx));
  if (!full) {
    bar('#fff', 110 + dx, y - 5, 180, 2);
    bar(BLACK, 110 + dx, y - 3, 180, 1);
  }
  bar(GREEN, 177 + dx, y - (full ? 1 : 0), 17, 1);
  bar(GREEN, 195 + dx, y - (full ? 1 : 0), 27, 1);
  bar(GREEN, 195 + dx, y + (full ? 0 : 1), 7, 1);
  bar(GREEN, 206 + dx, y + (full ? 0 : 1), 3, 1);
}
topMarks(0, 319, true);
topMarks(0, 471, false);
for (let i = 1; i < 5; i++) topMarks(i * 202, 472, true);
for (let i = 0; i < 5; i++) {
  topMarks(i * 202, 624, false);
  row('<', BLUE, 776, 150 + i * 202, 225 + i * 202);
  row('<', BLUE, 623, 151 + i * 202, 226 + i * 202);
}
row('<', BLUE, 470, 151, 226);
column('^', BLUE, 101, 369, 444, 522, 597, 675, 750);
column('v', BLUE, 301, 367, 369, 442, 444);
[302, 504, 706, 908, 1110].forEach(x => {
  column('v', BLUE, x, 521, 596, 673, 748);
  column('^', BLUE, x + 1, 521, 597, 674, 750);
});

/* Left column, upper door */
ring(BLUE, 127, 345, 276, 444, 2);
ring(BLACK, 130, 347, 274, 442, 1, 2, 1, 1);
ring(MAROON, 131, 348, 272, 441);
bar(GREEN, 177, 344, 13, 1); bar(GREEN, 214, 344, 8, 1);
bar(GREEN, 190, 345, 12, 2); bar(GREEN, 206, 345, 8, 2); bar(GREEN, 189, 348, 23, 1);
row('>', BLUE, 345, 184, 187, 193, 209, 212, 258, 261);
row('<', MAROON, 348, 139, 194, 207, 214);
row('>', MAROON, 440, 182, 257);
column('^', MAROON, 271, 366); column('v', MAROON, 131, 415);
column('^', BLUE, 127, 363, 365, 438, 440);
column('v', BLUE, 276, 402, 404, 408);
row('<', BLUE, 443, 200);

/* Raised-field frame: two thin lines round a heavy profile */
function raised(x0, y0, x1, y1, l = 2, r = 2) {
  ring(BLUE, x0, y0, x1, y1);
  ring(BLACK, x0 + 2, y0 + 2, x1 - 2, y1 - 2);
  ring(BLUE, x0 + 4, y0 + 4, x1 - 4, y1 - 4, 2);
  ring(BLACK, x0 + 6, y0 + 6, x1 - 6, y1 - 6, 2, r, 2, l);
}
raised(128, 498, 276, 597, 1);
bar(GREEN, 187, 498, 27, 1); bar(GREEN, 177, 501, 13, 1); bar(GREEN, 190, 502, 32, 1); bar(GREEN, 189, 591, 23, 1);
row('>', BLUE, 498, 185, 193, 208, 260);
row('>', BLUE, 502, 187, 196, 206, 211);
column('^', BLUE, 128, 518, 593); column('^', BLUE, 131, 505, 581);
column('v', BLUE, 276, 557); column('v', BLUE, 271, 509, 513, 584, 588);
row('<', BLUE, 592, 197, 199); row('<', BLUE, 595, 198);

/* Four-field doors */
for (const dx of [0, 202]) {
  ring(BLUE, 128 + dx, 651, 276 + dx, 750);
  bar(BLUE, 201 + dx, 651, 2, 99);
  bar(BLUE, 128 + dx, 700, 148, 2);
  for (const ox of [0, 74]) {
    const o = dx + ox, l = ox ? 3 : 2, xl = ox ? 205 + dx : 132 + dx, xr = ox ? 272 + dx : 198 + dx;
    for (const y of [653, 702]) ring(BLACK, 130 + o, y, 200 + o, y + 46);
    ring(BLUE, xl, 655, xr, 697, 2, 2, 3, l);
    ring(BLACK, xl + l, 657, xr - 2, 694, 2, 2, 1, 1);
    ring(BLUE, xl, 704, xr, 746, 3, 2, 2, l);
    ring(BLACK, xl + l, 707, xr - 2, 744, 1, 2, 2, 1);
    row('>', BLUE, 651, 157 + o, 173 + o);
    row('>', BLUE, 655, 152 + o, 177 + o, 179 + o);
    row('<', BLUE, 695, 159 + o, 170 + o);
    row('>', BLUE, 704, 158 + o, 176 + o, 179 + o);
    row('<', BLUE, 744, 160 + o, 171 + o);
    bar(GREEN, 150 + o, 651, 15, 1); bar(GREEN, 168 + o, 651, 9, 1);
    bar(GREEN, 140 + o, 654, 12, 1); bar(GREEN, 155 + o, 655, 30, 1);
    bar(GREEN, 158 + o, 694, 11, 1); bar(GREEN, 150 + o, 700, 27, 1);
    bar(GREEN, 140 + o, 704, 12, 1); bar(GREEN, 153 + o, 704, 12, 2); bar(GREEN, 169 + o, 704, 16, 2);
    bar(GREEN, 152 + o, 744, 23, 1);
    column('^', BLUE, 131 + o, 685, 735);
    column('v', BLUE, 202 + o, 683, 732);
  }
  column('^', BLUE, 128 + dx, 698, 747);
}

/* Doors with an inset frame */
for (const [dx, dy] of [[0, 0], [202, 0], [202, 153]]) {
  ring(BLUE, 331 + dx, 499 + dy, 477 + dx, 596 + dy);
  ring(BLACK, 332 + dx, 500 + dy, 476 + dx, 595 + dy);
  ring(BLUE, 342 + dx, 510 + dy, 466 + dx, 585 + dy, 3, 3, 1, 1);
  ring(MAROON, 343 + dx, 511 + dy, 465 + dx, 584 + dy, 1, 2, 1, 1);
  ring(BLACK, 345 + dx, (dy ? 513 : 514) + dy, 462 + dx, 582 + dy, dy ? 2 : 1, 1, 1, 1);
  bar(GREEN, 391 + dx, 511 + dy, 23, 1); bar(GREEN, 398 + dx, 512 + dy, 8, 1);
  bar(GREEN, 391 + dx, 584 + dy, 23, 1); bar(GREEN, 391 + dx, 595 + dy, 23, 1);
  row('>', BLUE, 499 + dy, 389 + dx, 465 + dx);
  row('>', BLUE, 510 + dy, 368 + dx, 377 + dx, 392 + dx, 412 + dx, 443 + dx, 452 + dx);
  row('<', MAROON, 511 + dy, 388 + dx, 399 + dx, 410 + dx, 463 + dx);
  row('>', MAROON, 583 + dy, 375 + dx, 450 + dx);
  row('<', BLUE, 584 + dy, 388 + dx, 396 + dx, 399 + dx, 410 + dx);
  row('<', BLUE, 595 + dy, 397 + dx, 402 + dx, 409 + dx);
  column('^', BLUE, 331 + dx, 517 + dy, 592 + dy);
  column('^', BLUE, 342 + dx, 553 + dy, 559 + dy);
  column('v', MAROON, 343 + dx, 541 + dy);
  column('v', BLUE, 477 + dx, 563 + dy); column('v', BLUE, 466 + dx, 563 + dy);
  column('v', BLUE, 464 + dx, 576 + dy);
}
ring(MAROON, 556, 675, 656, 726);
bar(GREEN, 593, 675, 23, 1);
row('<', MAROON, 675, 599, 611, 632); row('>', MAROON, 725, 579);
column('v', MAROON, 556, 674);

for (const dx of [0, 202]) {
  ring(BLUE, 733 + dx, 497, 883 + dx, 598);
  ring(BLACK, 734 + dx, 498, 882 + dx, 597);
  bar(GREEN, 795 + dx, 597, 23, 1);
  row('>', BLUE, 497, 785 + dx, 860 + dx);
  row('<', BLUE, 597, 801 + dx, 809 + dx, 813 + dx);
  column('^', BLUE, 733 + dx, 522, 597); column('v', BLUE, 882 + dx, 549);

  raised(734 + dx, 651, 882 + dx, 750);
  bar(GREEN, 800 + dx, 651, 21, 1); bar(GREEN, 783 + dx, 654, 13, 1);
  bar(GREEN, 796 + dx, 655, 32, 1); bar(GREEN, 795 + dx, 744, 23, 1);
  row('>', BLUE, 651, 791 + dx, 799 + dx, 814 + dx, 866 + dx);
  row('>', BLUE, 655, 795 + dx, 811 + dx, 813 + dx);
  row('<', BLUE, 745, 802 + dx, 805 + dx); row('<', BLUE, 749, 804 + dx);
  column('^', BLUE, 734 + dx, 671, 746); column('^', BLUE, 738 + dx, 658, 734);
  column('v', BLUE, 882 + dx, 709); column('v', BLUE, 877 + dx, 662, 668, 737, 743);
}

/* Right column */
ring(BLUE, 1138, 400, 1238, 548, 2);
ring(BLACK, 1140, 402, 1235, 546);
ring(MAROON, 1141, 403, 1234, 545);
bar(GREEN, 1236, 449, 2, 25); bar(GREEN, 1236, 478, 2, 16); bar(GREEN, 1233, 460, 1, 23);
bar(GREEN, 1263, 459, 1, 29); bar(GREEN, 1263, 661, 1, 29);
row('>', BLUE, 373, 1137, 1212); row('>', BLUE, 400, 1143, 1145, 1218, 1220);
row('<', MAROON, 403, 1166); row('>', MAROON, 544, 1216);
row('<', BLUE, 547, 1173, 1177, 1179);
column('^', MAROON, 1233, 411, 467, 479, 486);
column('v', MAROON, 1141, 454, 529); column('^', BLUE, 1138, 471);
column('v', BLUE, 1237, 455, 460, 475, 485, 531, 535);
column('^', BLUE, 1112, 422, 497, 624, 700);
column('v', BLUE, 1263, 397, 399, 460, 465, 472, 480, 485, 547, 549, 600, 662, 667, 675, 682, 687, 750);
row('>', BLUE, 576, 1137, 1212); row('<', BLUE, 573, 1139, 1213); row('<', BLUE, 776, 1139, 1213);

raised(1138, 602, 1237, 750, 2, 1);
bar(GREEN, 1233, 651, 1, 44); bar(GREEN, 1232, 661, 1, 28); bar(GREEN, 1236, 661, 1, 28);
row('>', BLUE, 602, 1143, 1218); row('>', BLUE, 605, 1154, 1156, 1230);
column('^', BLUE, 1138, 672); column('^', BLUE, 1143, 671, 682);
column('v', BLUE, 1237, 659, 667, 681, 687, 733); column('v', BLUE, 1232, 662, 678, 682, 688);
row('<', BLUE, 749, 1177); row('<', BLUE, 746, 1148, 1151, 1222, 1224);
```
